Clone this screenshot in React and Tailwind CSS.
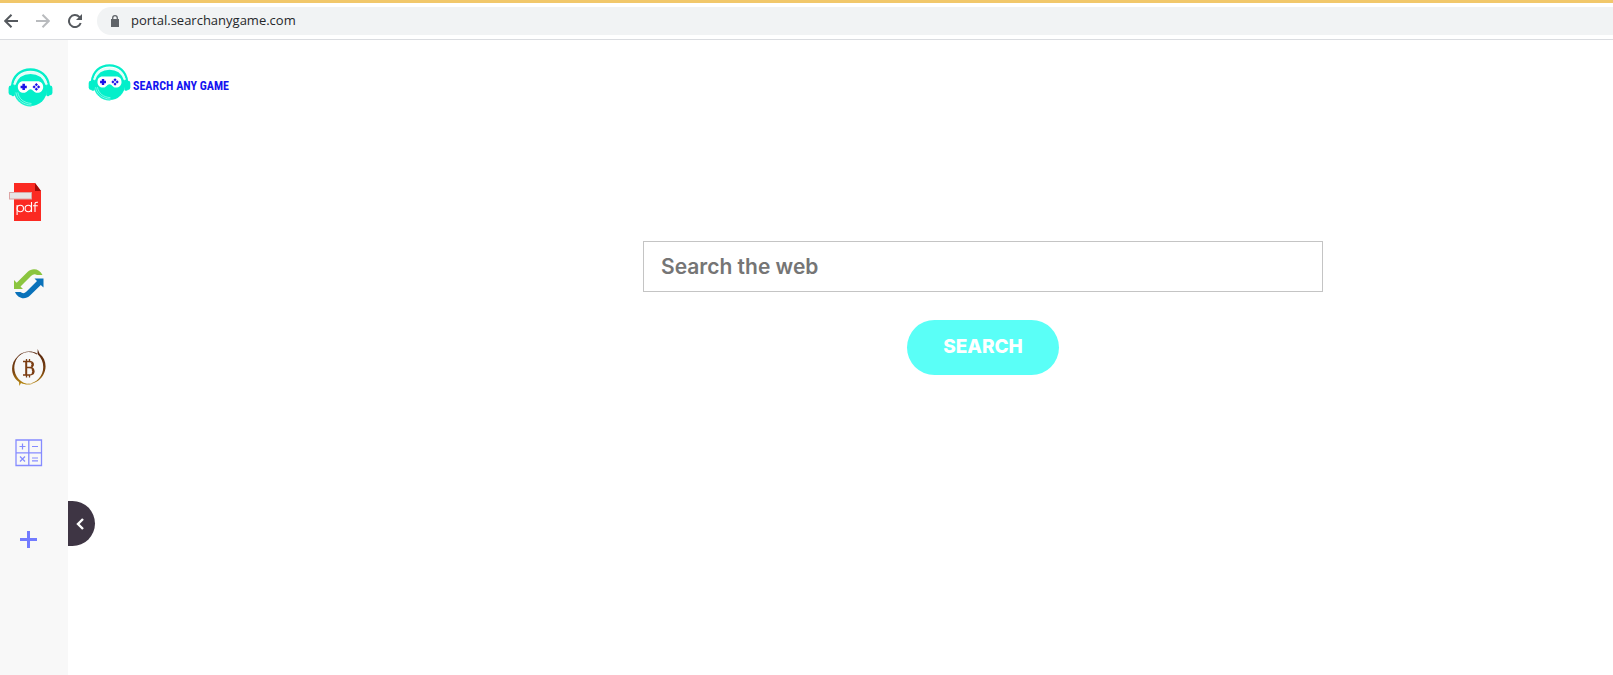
function HeadsetLogo({ className }) {
  return (
    <svg viewBox="0 0 46 40" className={className} aria-hidden="true">
      <path d="M4 19C5 8 13 1.500 23 1.500S41 8 42 19" fill="none" stroke="#04efca" strokeWidth="2.400" />
      <circle cx="23" cy="22" r="17" fill="#04efca" />
      <path d="M6.500 24C7 33 14 39 24 39.300" fill="none" stroke="#04efca" strokeWidth="0.700" />
      <path d="M8 25C9 32.500 15 37.500 24 38M10 25C11 31.500 16 35.800 24 36.400" fill="none" stroke="#b4fff1" strokeWidth="0.700" />
      <path d="M6.500 17C9 9.500 15 5 23 5S37 9.500 39.500 17" fill="none" stroke="#e2fff9" strokeWidth="2.200" />
      <rect x="0.500" y="18" width="5" height="10" rx="2.500" fill="#04efca" />
      <rect x="3.300" y="17" width="3.600" height="12" rx="1.500" fill="#04efca" />
      <rect x="40.500" y="18" width="5" height="10" rx="2.500" fill="#04efca" />
      <rect x="39.100" y="17" width="3.600" height="12" rx="1.500" fill="#04efca" />
      <path d="M15.500 13.500H30C34 13.500 36 16 36 19.500S33.500 25.500 30 25.500C26.500 25.500 25.500 21.800 23 21.800S19.500 25.500 16 25.500S10 23 10 19.500S12 13.500 15.500 13.500Z" fill="#fff" />
      <path d="M14.700 16.200H17.300V18.100H19.200V20.700H17.300V22.600H14.700V20.700H12.800V18.100H14.700Z" fill="#1b12e8" />
      <path d="M29 15.400L30.700 17.100L29 18.800L27.300 17.100ZM29 20L30.700 21.700L29 23.400L27.300 21.700ZM26.700 17.700L28.400 19.400L26.700 21.100L25 19.400ZM31.300 17.700L33 19.400L31.300 21.100L29.600 19.400Z" fill="#1b12e8" />
    </svg>
  );
}

function PdfIcon() {
  return (
    <svg viewBox="0 0 33 38" className="h-[38px] w-[33px]" aria-hidden="true">
      <path d="M5 0H26L32 8V38H5Z" fill="#fb2a22" />
      <path d="M26 0L32 8H26Z" fill="#a30b08" />
      <rect x="0.500" y="9.500" width="22" height="6.500" fill="#e6e6e6" stroke="#dca5a5" />
      <g fill="none" stroke="#fff" strokeWidth="1.100">
        <circle cx="11.300" cy="25.500" r="3.200" />
        <path d="M8.100 22V32" />
        <circle cx="19.300" cy="25.500" r="3.200" />
        <path d="M22.500 19V29M26 29V21Q26 19 29 19.300M24 22.800H28.800" />
      </g>
    </svg>
  );
}

function ConvertIcon() {
  return (
    <svg viewBox="0 0 30 30" className="size-[30px]" aria-hidden="true">
      <path d="M0 11V20H9L6.500 17.500L17 7Q20 4.200 23 6H28.500C25.500-.5 18-1.500 13.500 3L2.700 13.700Z" fill="#8bc53f" />
      <path d="M29.500 9.500V18.500L26.800 16L16 26.500C11.500 31 4 30 1 23H6.500Q9.500 25.500 12.500 22.500L23 12L20.500 9.500Z" fill="#0a72ba" />
    </svg>
  );
}

function BitcoinIcon() {
  return (
    <svg viewBox="0 0 36 38" className="h-[38px] w-[36px]" aria-hidden="true">
      <defs>
        <linearGradient id="coin" gradientUnits="userSpaceOnUse" x1="0" y1="0" x2="0" y2="38">
          <stop offset="0" stopColor="#54230f" />
          <stop offset="0.600" stopColor="#7b4310" />
          <stop offset="1" stopColor="#c79a16" />
        </linearGradient>
      </defs>
      <path d="M26.500 5L26.700 0L28.500 4.500C38 12 36 27 25 33Q21 35.500 16 35C31 34 38 16 26.500 5ZM26 4.500C20 1 11 2.500 7 7C-2 15 0 28 8 33L8.300 37L10 34C13 35.500 17 36 21 35C8 36 1 24 4 14C7 4 17 0 26 5.500Z" fill="url(#coin)" />
      <g fill="none" stroke="#7b3d12">
        <path d="M12 12.500H18C23.500 12.500 23.500 18.500 18 18.500H15M18 18.500C24.500 18.500 24.500 26 18 26H12" strokeWidth="1.300" />
        <path d="M15.200 12.500V26M20.700 13.500Q22.700 15.500 20.700 17.500M21.300 20Q23.300 22.500 21.300 25" strokeWidth="2" />
        <path d="M15.500 10V12.500M18.500 10V12.500M15.500 26V28.500M18.500 26V28.500" strokeWidth="1.300" />
      </g>
    </svg>
  );
}

function CalculatorIcon() {
  return (
    <svg viewBox="0 0 28 28" className="size-7" fill="none" stroke="#858bff" aria-hidden="true">
      <path d="M1 1H26.500V26.500H1ZM13.800 1V26.500M1 13.800H26.500" strokeWidth="1.300" />
      <path d="M4.500 7.500H10.500M7.500 4.500V10.500M17 7.500H23M5 17.500L10 22.500M10 17.500L5 22.500M17 19H23M17 21.800H23" strokeWidth="1.200" />
    </svg>
  );
}

function PlusIcon() {
  return (
    <svg viewBox="0 0 17 17" className="size-[17px]" aria-hidden="true">
      <path d="M7 0H10V7H17V10H10V17H7V10H0V7H7Z" fill="#727bff" />
    </svg>
  );
}

function BrowserBar() {
  return (
    <header className="flex h-10 items-center border-t-[3px] border-b border-t-[#f1c76a] border-b-[#dadce0] bg-white">
      <nav className="flex shrink-0 items-center gap-[18px] pl-1 text-[#5f6368]" aria-label="Browser">
        <button type="button" aria-label="Back">
          <svg viewBox="0 0 14 14" className="size-3.5" fill="none" stroke="#55595e" strokeWidth="2"><path d="M14 7H1.500M7.500 .7L1.200 7L7.500 13.300" /></svg>
        </button>
        <button type="button" aria-label="Forward">
          <svg viewBox="0 0 14 14" className="size-3.5" fill="none" stroke="#b9bbbe" strokeWidth="2"><path d="M0 7H12.500M6.500 .7L12.800 7L6.500 13.300" /></svg>
        </button>
        <button type="button" aria-label="Reload">
          <svg viewBox="0 0 14 14" className="size-3.5"><path d="M12.700 9A6 6 0 1 1 11.300 2.900L13 4.600" fill="none" stroke="#55595e" strokeWidth="2" /><path d="M14 0V6H8Z" fill="#55595e" /></svg>
        </button>
      </nav>
      <div className="ml-[15px] flex h-7 grow items-center gap-3 rounded-l-full bg-[#f1f3f4] pl-3.5">
        <svg viewBox="0 0 8 12" className="h-3 w-2" aria-hidden="true"><path d="M0 4H8V12H0Z" fill="#5f6368" /><path d="M1.700 5V3A2.300 2.300 0 0 1 6.300 3V5" fill="none" stroke="#5f6368" strokeWidth="1.300" /></svg>
        <input aria-label="Address" defaultValue="portal.searchanygame.com" className="min-w-0 grow bg-transparent font-['Open_Sans',sans-serif] text-[13px] text-[#26282b] outline-none" />
      </div>
    </header>
  );
}

export default function App() {
  return (
    <div className="flex min-h-screen flex-col bg-white">
      <BrowserBar />
      <div className="flex grow">
        <nav className="flex w-[68px] shrink-0 flex-col bg-[#f8f8f8] pt-7" aria-label="Apps">
          <a href="#home" aria-label="Search Any Game" className="ml-2 w-fit"><HeadsetLogo className="h-[39px] w-[45px]" /></a>
          <div className="flex w-[57px] flex-col items-center gap-12 pt-[76px]">
            <a href="#pdf" aria-label="PDF" className="mr-1.5"><PdfIcon /></a>
            <a href="#convert" aria-label="Convert"><ConvertIcon /></a>
            <a href="#bitcoin" aria-label="Bitcoin" className="pt-0.5"><BitcoinIcon /></a>
            <a href="#calculator" aria-label="Calculator" className="pt-1"><CalculatorIcon /></a>
            <button type="button" aria-label="Add app" className="pt-4"><PlusIcon /></button>
          </div>
        </nav>
        <main className="relative flex grow flex-col">
          <button type="button" aria-label="Collapse sidebar" className="absolute top-[461px] left-0 flex h-[45px] w-[27px] items-center justify-center rounded-r-full bg-[#3e3544] pr-1">
            <svg viewBox="0 0 8 12" className="h-3 w-2" fill="none" stroke="#fff" strokeWidth="2.400"><path d="M7 1L2 6L7 11" /></svg>
          </button>
          <a href="#home" className="mt-6 ml-5 flex w-fit items-center gap-0.5 text-[#1414f0]">
            <HeadsetLogo className="h-[37px] w-[43px]" />
            <span className="pt-1.5 font-['Roboto_Condensed','Liberation_Sans_Narrow',sans-serif] text-xs leading-4 font-bold">SEARCH ANY GAME</span>
          </a>
          <form className="flex flex-col items-center gap-7 pt-[140px] pl-[285px] font-[Inter,sans-serif]" onSubmit={(e) => e.preventDefault()}>
            <input type="text" aria-label="Search the web" placeholder="Search the web" className="h-[51px] w-[680px] max-w-full border border-[#c4c4c4] bg-white px-[17px] text-[21px] font-semibold outline-none placeholder:text-[#757575]" />
            <button type="submit" className="h-[55px] rounded-full bg-[#5afff7] px-9 text-[19px] font-extrabold text-white">SEARCH</button>
          </form>
        </main>
      </div>
    </div>
  );
}
